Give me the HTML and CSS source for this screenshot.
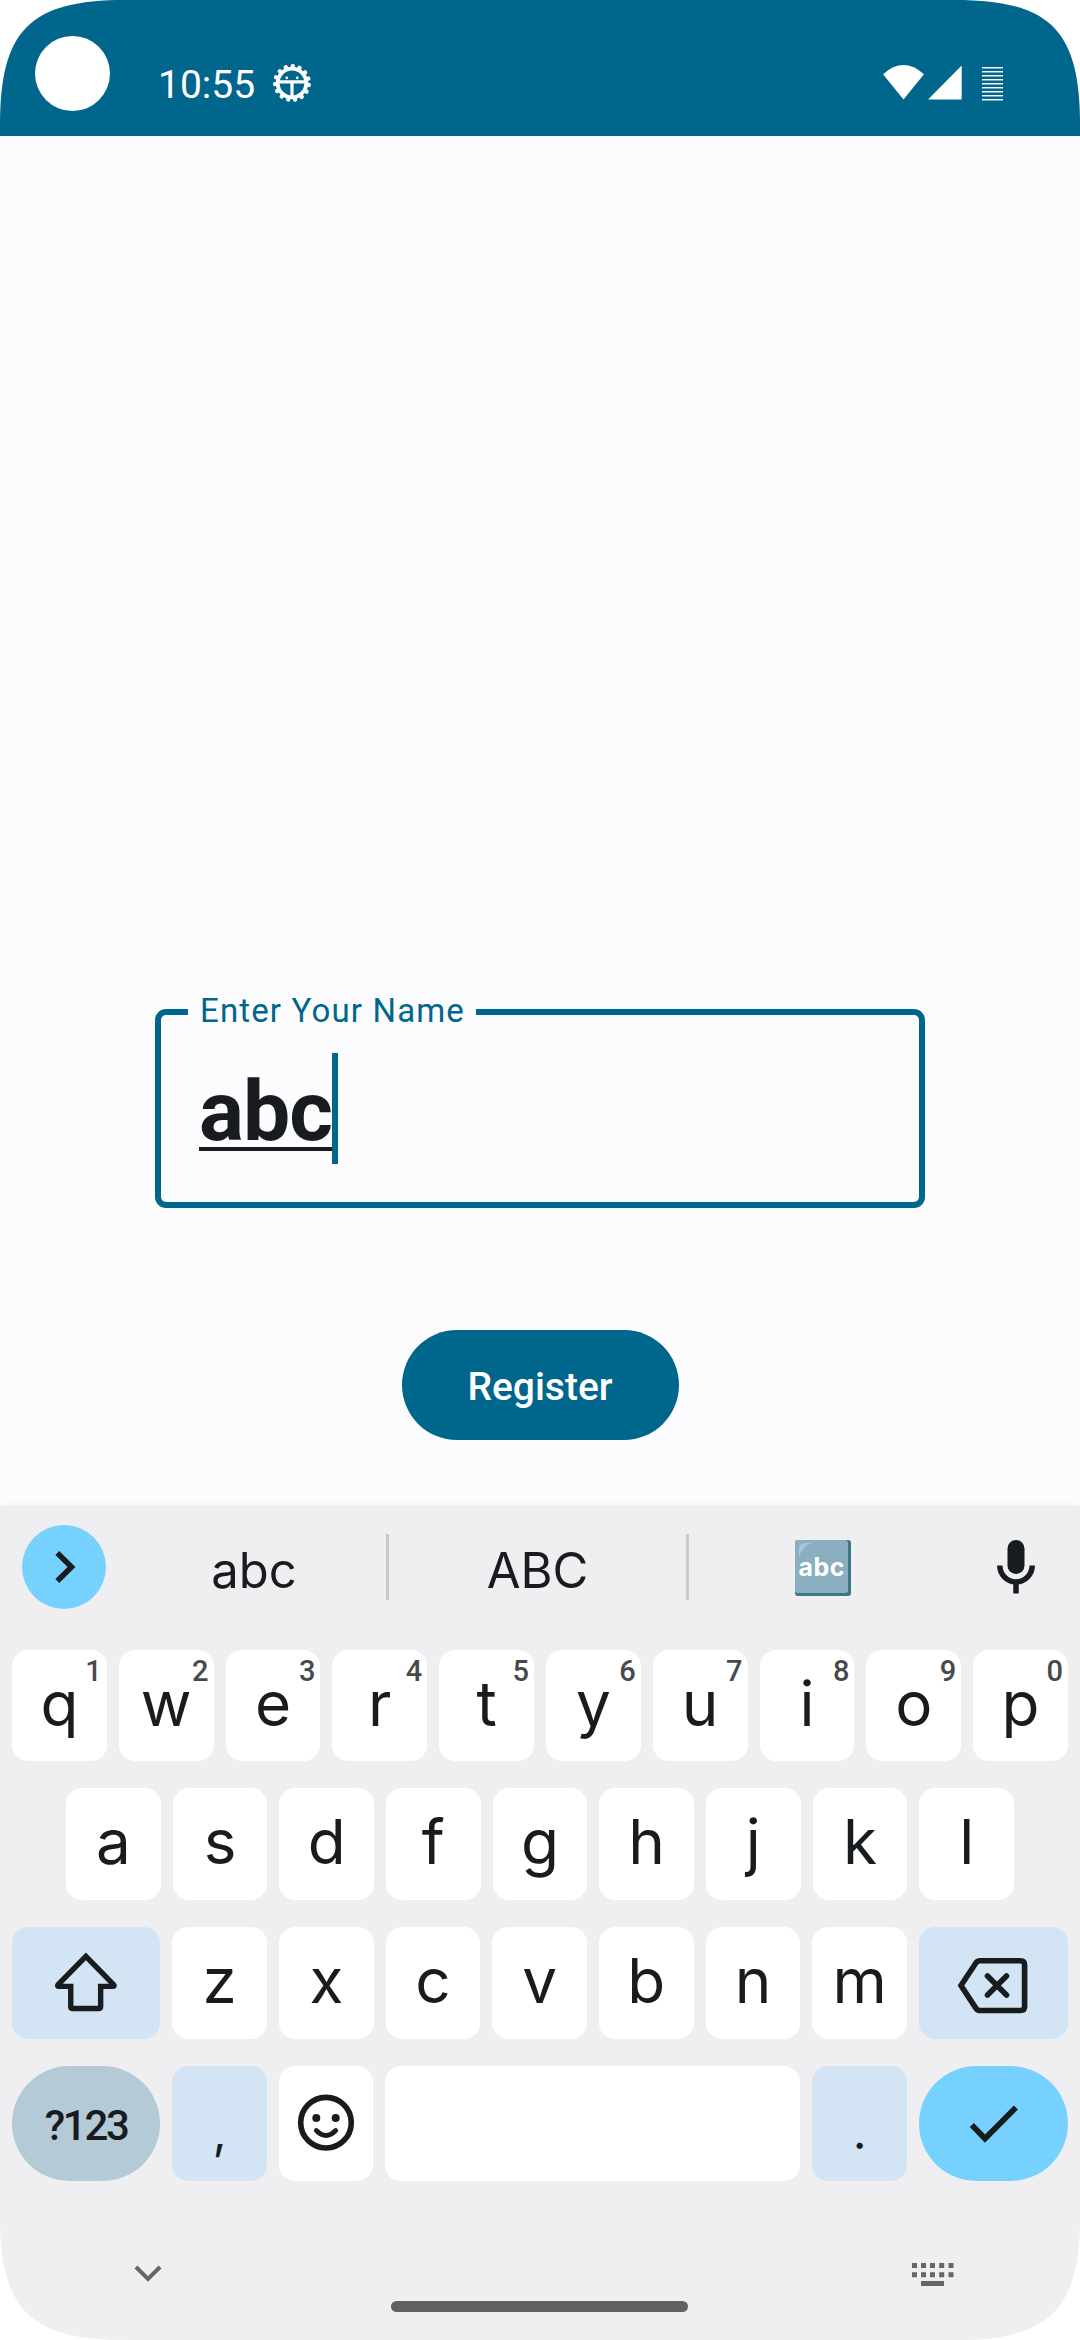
FILE: index.html
```html
<!DOCTYPE html>
<html lang="en">
<head>
<meta charset="utf-8">
<title>Register</title>
<link rel="stylesheet" href="styles.css">
</head>
<body>
<div class="phone">
  <header class="status">
    <span class="camera"></span>
    <span class="clock">10:55</span>
    <svg class="bug" viewBox="-20 -20 40 40">
      <circle r="14.300" fill="none" stroke="#fff" stroke-width="3.800"/>
      <circle r="17" fill="none" stroke="#fff" stroke-width="4" stroke-linecap="round" stroke-dasharray="0.400 6.721" transform="rotate(6)"/>
      <path d="M-14-1.200H14M0-1V14" stroke="#fff" stroke-width="3.200"/>
      <circle cx="-5.200" cy="-5.200" r="1.400" fill="#fff"/><circle cx="5.200" cy="-5.200" r="1.400" fill="#fff"/>
    </svg>
    <svg class="signals" viewBox="0 0 122 38">
      <path d="M0 10.300Q20.500-8.200 41 10.300L20.500 35.500Z" fill="#fff"/>
      <path d="M45 35.500L78.700 1.500V35.500Z" fill="#fff"/>
      <path d="M99 3.500h21m-21 4h21m-21 4h21m-21 4h21m-21 4h21m-21 4h21m-21 4h21m-21 4h21m-21 4h21" stroke="#fff" stroke-width="1"/>
      <path d="M99 4.500h21m-21 4h21m-21 4h21m-21 4h21m-21 4h21m-21 4h21m-21 4h21m-21 4h21m-21 4h21" stroke="#fff" stroke-opacity=".45" stroke-width="1"/>
    </svg>
  </header>
  <main class="content">
    <div class="field">
      <label class="label">Enter Your Name</label>
      <span class="value">abc</span><span class="caret"></span>
    </div>
    <button class="register">Register</button>
  </main>
  <section class="keyboard">
    <div class="suggestions">
      <span class="expand"><svg viewBox="0 0 84 84"><path d="M35.300 28L49.500 42L35.300 56" fill="none" stroke="#191c1e" stroke-width="5.500"/></svg></span>
      <span class="word first">abc</span>
      <i class="divider"></i>
      <span class="word">ABC</span>
      <i class="divider"></i>
      <span class="word picture">
        <svg class="abc-emoji" viewBox="0 0 56 56">
          <rect width="56" height="56" rx="3" fill="#427687"/>
          <path d="M3 0H50Q53 0 53 3V50Q53 53 50 53H3Q0 53 0 50V3Q0 0 3 0Z" fill="#8cafbf"/>
          <path d="M4 16V9Q4 3 10 3H17Q12 4 9 8Q6 12 4 16Z" fill="#a3c9d9"/>
          <text x="26.500" y="35.500" text-anchor="middle" textLength="46" class="emoji-text">abc</text>
        </svg>
      </span>
      <svg class="mic" viewBox="0 0 38 54">
        <rect x="10.500" y="0" width="17" height="34" rx="8.500" fill="#191c1e"/>
        <path d="M2.800 25.500a16.200 16.500 0 0 0 32.400 0M19 42V53.500" fill="none" stroke="#191c1e" stroke-width="5.500"/>
      </svg>
    </div>
    <div class="row row-top">
      <span class="key">q<sup>1</sup></span><span class="key">w<sup>2</sup></span><span class="key">e<sup>3</sup></span><span class="key">r<sup>4</sup></span><span class="key">t<sup>5</sup></span><span class="key">y<sup>6</sup></span><span class="key">u<sup>7</sup></span><span class="key">i<sup>8</sup></span><span class="key">o<sup>9</sup></span><span class="key">p<sup>0</sup></span>
    </div>
    <div class="row row-home">
      <span class="key">a</span><span class="key">s</span><span class="key">d</span><span class="key">f</span><span class="key">g</span><span class="key">h</span><span class="key">j</span><span class="key">k</span><span class="key">l</span>
    </div>
    <div class="row row-shift">
      <span class="key soft"><svg viewBox="0 0 148 112"><path d="M73.700 29.300L46 57.500Q44.500 59.400 47 59.400H58.600V79.500Q58.600 81.500 60.600 81.500H86.500Q88.500 81.500 88.500 79.500V59.400H100.400Q103 59.400 101.400 57.500Z" fill="none" stroke="#191c1e" stroke-width="5.400"/></svg></span>
      <span class="key">z</span><span class="key">x</span><span class="key">c</span><span class="key">v</span><span class="key">b</span><span class="key">n</span><span class="key">m</span>
      <span class="key soft"><svg viewBox="0 0 149 112"><path d="M42 58.500L57 35.800Q58.500 33.800 61 33.800H101.500Q105.600 33.800 105.600 38V79.500Q105.600 83.500 101.500 83.500H61Q58.500 83.500 57 81.300Z" fill="none" stroke="#191c1e" stroke-width="5.600"/><path d="M68.500 49L87.500 68M87.500 49L68.500 68" stroke="#191c1e" stroke-width="5.600" stroke-linecap="round"/></svg></span>
    </div>
    <div class="row row-bottom">
      <span class="key symbols">?123</span>
      <span class="key soft punct">,</span>
      <span class="key"><svg viewBox="0 0 94 115"><circle cx="46.700" cy="56.700" r="25.300" fill="none" stroke="#191c1e" stroke-width="5.600"/><circle cx="37" cy="52" r="4" fill="#191c1e"/><circle cx="56.400" cy="52" r="4" fill="#191c1e"/><path d="M37 64.500Q46.700 74.500 56.400 64.500" fill="none" stroke="#191c1e" stroke-width="4.800" stroke-linecap="round"/></svg></span>
      <span class="key"></span>
      <span class="key soft punct">.</span>
      <span class="key enter"><svg viewBox="0 0 149 115"><path d="M52.800 59L66 72.500L96.900 41.500" fill="none" stroke="#191c1e" stroke-width="5.800"/></svg></span>
    </div>
    <nav class="navbar">
      <svg class="hide" viewBox="0 0 28 18"><path d="M2 3L14 15L26 3" fill="none" stroke="#666" stroke-width="4"/></svg>
      <span class="home"></span>
      <svg class="switch" viewBox="0 0 42 23"><path d="M0 2.500H5M9 2.500h5M18 2.500h5M27.200 2.500h5M36.500 2.500h5M0 11.700H5M9 11.700h5M18 11.700h5M27.200 11.700h5M36.500 11.700h5M9 20.500H32" stroke="#666" stroke-width="5"/></svg>
    </nav>
  </section>
</div>
</body>
</html>
```
FILE: styles.css
```css
* { box-sizing: border-box; }
body { margin: 0; background: #fff; }
.phone {
  width: 1080px;
  height: 2340px;
  display: flex;
  flex-direction: column;
  background: #fcfcff;
  font-family: Roboto, sans-serif;
  color: #191c1e;
  clip-path: path("M0 125C0 30 30 0 125 0H955C1050 0 1080 30 1080 125V2215C1080 2310 1050 2340 955 2340H125C30 2340 0 2310 0 2215Z");
}
.status {
  height: 136px;
  flex: none;
  background: #00668b;
  color: #fff;
  display: flex;
  align-items: flex-start;
  padding-left: 35px;
}
.camera { width: 75px; height: 75px; border-radius: 50%; background: #fff; margin-top: 36px; }
.clock { font-size: 39px; line-height: 46px; margin: 62px 0 0 48px; width: 98px; white-space: nowrap; }
.bug { width: 40px; height: 40px; margin: 63px 0 0 16px; }
.signals { width: 122px; height: 38px; margin: 64px 75px 0 auto; }
.content {
  flex: 1;
  display: flex;
  flex-direction: column;
  align-items: center;
  padding-top: 873px;
}
.field {
  position: relative;
  width: 770px;
  height: 199px;
  border: 6px solid #00668b;
  border-radius: 11px;
  display: flex;
  align-items: flex-start;
  padding: 38px 0 0 38px;
}
.label {
  position: absolute;
  left: 27px;
  top: -24px;
  width: 288px;
  padding-left: 12px;
  background: #fcfcff;
  color: #00668b;
  font-size: 33px;
  line-height: 40px;
  letter-spacing: 1.15px;
  white-space: nowrap;
}
.value {
  font-size: 84px;
  font-weight: 700;
  line-height: 118px;
  height: 98px;
  width: 133px;
  letter-spacing: -1px;
  border-bottom: 4px solid #191c1e;
}
.caret { width: 5.5px; height: 111px; background: #00668b; }
.register {
  margin-top: 122px;
  width: 277px;
  height: 110px;
  border: 0;
  border-radius: 55px;
  background: #00668b;
  color: #fff;
  font: 500 39px/46px Roboto, sans-serif;
  padding: 3px 0 0;
}
.keyboard {
  height: 834px;
  flex: none;
  background: #efeff1;
  box-shadow: 0 0 6px #efeff1;
  font-family: Inter, sans-serif;
  display: flex;
  flex-direction: column;
}
.suggestions {
  height: 144px;
  padding: 19px 45px 41px 22px;
  display: flex;
  align-items: center;
}
.expand { width: 84px; height: 84px; border-radius: 42px; background: #77d1ff; flex: none; }
.expand svg, .key svg { display: block; width: 100%; height: 100%; }
.word { width: 297px; display: flex; justify-content: center; font-size: 49px; line-height: 60px; padding-top: 7px; }
.word.first { width: 280px; padding-left: 16px; }
.word.picture { padding-top: 2px; }
.divider { width: 3px; height: 66px; background: #c9cacc; flex: none; }
.abc-emoji { width: 56px; height: 56px; margin-left: -30px; }
.emoji-text { font: 700 25px Inter, sans-serif; fill: #fff; }
.mic { width: 38px; height: 54px; margin-left: auto; }
.row { display: grid; grid-template-rows: 100%; column-gap: 12px; margin: 0 12px; height: 112px; flex: none; }
.row-top { grid-template-columns: repeat(10, 1fr); height: 111px; }
.row-home { grid-template-columns: repeat(9, 1fr); margin: 27px 66px 0; }
.row-shift { grid-template-columns: 148.3px repeat(7, 1fr) 149px; margin-top: 27px; }
.row-bottom { grid-template-columns: 148.3px 94.6px 94.6px 1fr 94.6px 149px; height: 115px; margin-top: 27px; }
.key {
  position: relative;
  background: #fff;
  border-radius: 16px;
  font-size: 62px;
  line-height: 107px;
  text-align: center;
}
.key sup { position: absolute; top: 4px; right: 5px; font: 500 29px/34px Roboto, sans-serif; color: #474a4c; }
.soft { background: #d3e5f4; }
.symbols {
  background: #b4cad6;
  border-radius: 57.5px;
  font: 500 42px/119px Roboto, sans-serif;
  letter-spacing: -2.3px;
}
.punct { font-size: 48px; line-height: 131px; }
.enter { background: #77d1ff; border-radius: 57.5px; }
.navbar { flex: 1; display: flex; align-items: flex-start; padding: 0 126px 0 134px; }
.hide { width: 28px; height: 18px; margin-top: 83px; }
.home { width: 297px; height: 11px; border-radius: 6px; background: #606060; margin: 120px 0 0 229px; }
.switch { width: 42px; height: 23px; margin: 82px 0 0 auto; }
```
